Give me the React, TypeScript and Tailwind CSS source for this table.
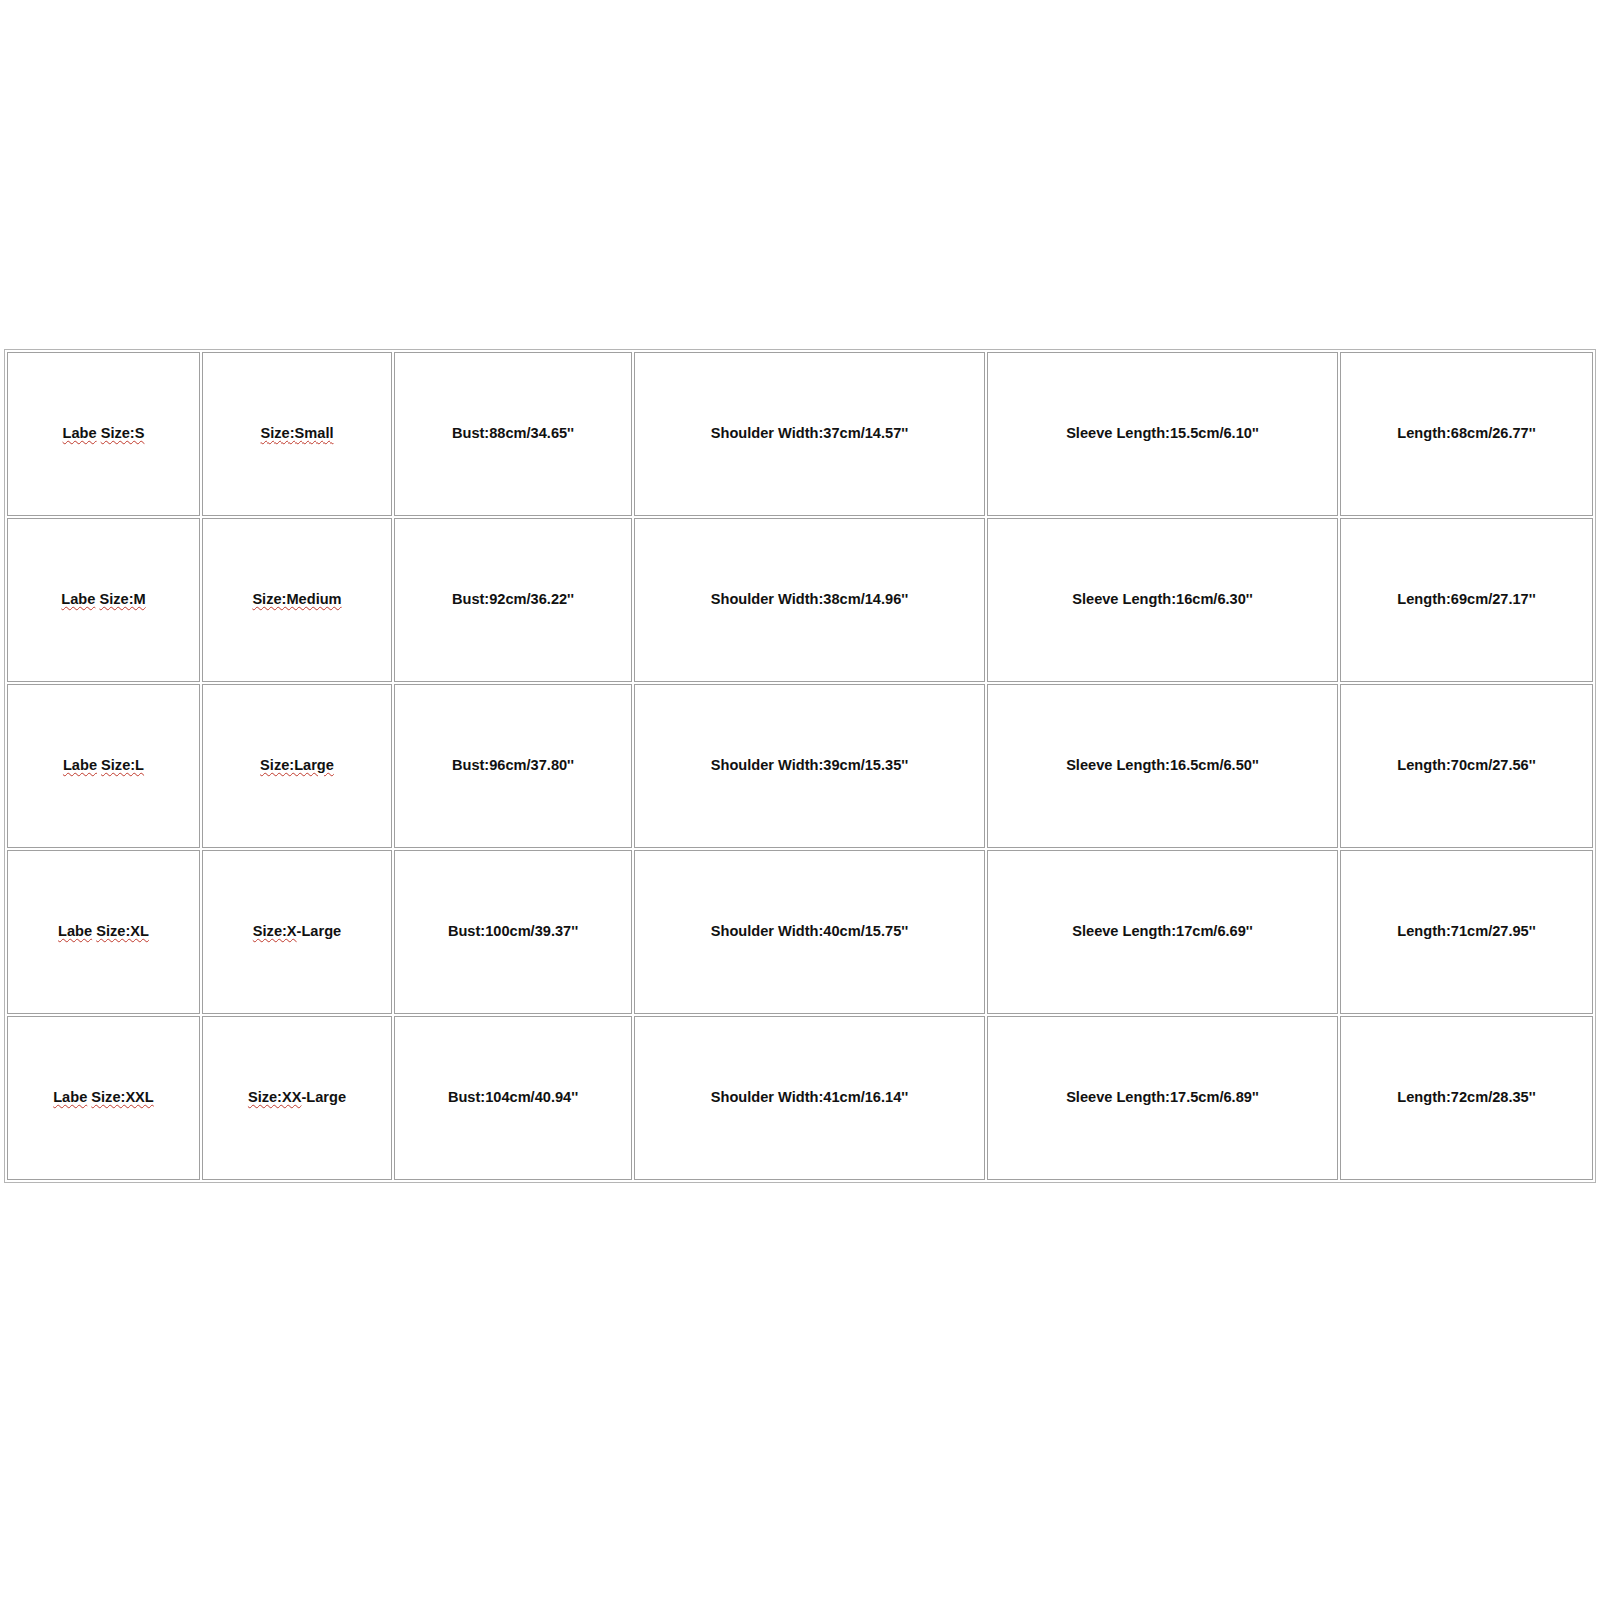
import React from "react";

type Row = {
  label: string[];
  size: string[];
  bust: string;
  shoulder: string;
  sleeve: string;
  length: string;
};

// each entry in label/size: [squiggled part, plain rest]
const rows: Row[] = [
  { label: ["Labe", "Size:S"], size: ["Size:Small", ""], bust: "Bust:88cm/34.65''", shoulder: "Shoulder Width:37cm/14.57''", sleeve: "Sleeve Length:15.5cm/6.10''", length: "Length:68cm/26.77''" },
  { label: ["Labe", "Size:M"], size: ["Size:Medium", ""], bust: "Bust:92cm/36.22''", shoulder: "Shoulder Width:38cm/14.96''", sleeve: "Sleeve Length:16cm/6.30''", length: "Length:69cm/27.17''" },
  { label: ["Labe", "Size:L"], size: ["Size:Large", ""], bust: "Bust:96cm/37.80''", shoulder: "Shoulder Width:39cm/15.35''", sleeve: "Sleeve Length:16.5cm/6.50''", length: "Length:70cm/27.56''" },
  { label: ["Labe", "Size:XL"], size: ["Size:X", "-Large"], bust: "Bust:100cm/39.37''", shoulder: "Shoulder Width:40cm/15.75''", sleeve: "Sleeve Length:17cm/6.69''", length: "Length:71cm/27.95''" },
  { label: ["Labe", "Size:XXL"], size: ["Size:XX", "-Large"], bust: "Bust:104cm/40.94''", shoulder: "Shoulder Width:41cm/16.14''", sleeve: "Sleeve Length:17.5cm/6.89''", length: "Length:72cm/28.35''" },
];

const squiggle = "underline decoration-wavy decoration-[#c0392b] decoration-1 underline-offset-[2px]";

const cell = "border border-[#a0a0a0] text-center align-middle h-[164px] p-0";

export default function App() {
  return (
    <div className="bg-white min-h-[1600px] w-[1600px] pt-[349px] pl-[4px]" style={{ fontFamily: '"Liberation Sans", Arial, sans-serif' }}>
      <table className="table-fixed border-separate border-spacing-[2px] border border-[#b5b5b5] w-[1592px] text-[14.6px] font-bold text-[#111]">
        <tbody>
          {rows.map((r, i) => (
            <tr key={i}>
              <td className={`${cell} w-[193px]`}>
                <span className={squiggle}>{r.label[0]}</span>{" "}
                <span className={squiggle}>{r.label[1]}</span>
              </td>
              <td className={`${cell} w-[190px]`}>
                <span className={squiggle}>{r.size[0]}</span>
                {r.size[1]}
              </td>
              <td className={`${cell} w-[238px]`}>{r.bust}</td>
              <td className={`${cell} w-[351px]`}>{r.shoulder}</td>
              <td className={`${cell} w-[351px]`}>{r.sleeve}</td>
              <td className={`${cell} w-[253px]`}>{r.length}</td>
            </tr>
          ))}
        </tbody>
      </table>
    </div>
  );
}
